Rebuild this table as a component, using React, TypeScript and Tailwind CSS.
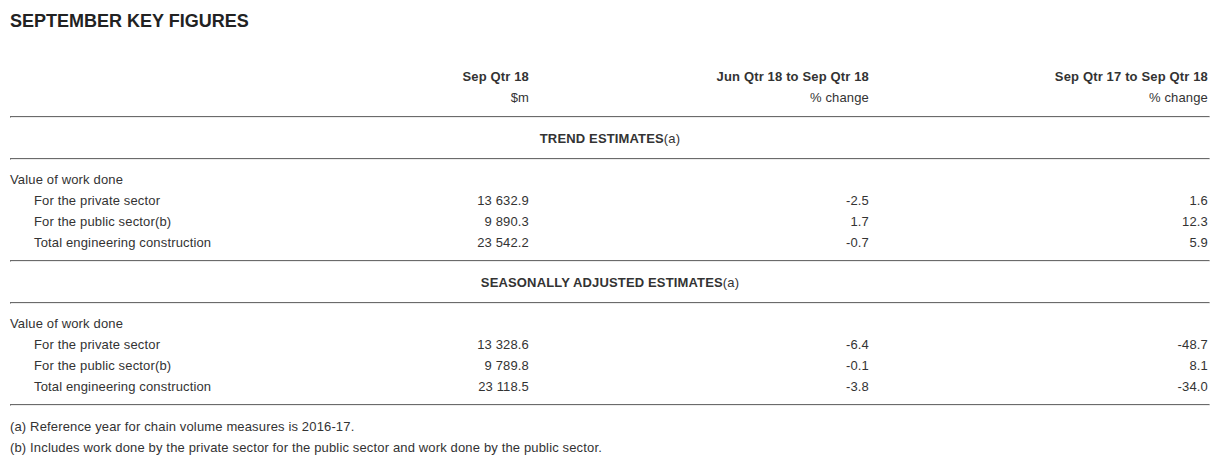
const rows = (
  vals: [string, string, string, string][]
) => vals;

const trend = rows([
  ['For the private sector', '13 632.9', '-2.5', '1.6'],
  ['For the public sector(b)', '9 890.3', '1.7', '12.3'],
  ['Total engineering construction', '23 542.2', '-0.7', '5.9'],
]);

const seasonal = rows([
  ['For the private sector', '13 328.6', '-6.4', '-48.7'],
  ['For the public sector(b)', '9 789.8', '-0.1', '8.1'],
  ['Total engineering construction', '23 118.5', '-3.8', '-34.0'],
]);

function Rule() {
  return (
    <div className="h-[2px] border border-t-[#6b6b6b] border-l-[#6b6b6b] border-b-[#ececec] border-r-[#ececec]" />
  );
}

function Row({ cells, indent }: { cells: [string, string, string, string]; indent?: boolean }) {
  return (
    <div className="grid h-[21px] grid-cols-[290px_231px_340px_339px] leading-[21px]">
      <div className={indent ? 'pl-[24px]' : ''}>{cells[0]}</div>
      <div className="pr-[2px] text-right">{cells[1]}</div>
      <div className="pr-[2px] text-right">{cells[2]}</div>
      <div className="pr-[2px] text-right">{cells[3]}</div>
    </div>
  );
}

function Section({ title, data }: { title: string; data: [string, string, string, string][] }) {
  return (
    <>
      <div className="pt-[10px] pb-[9px] text-center leading-[21px]">
        <span className="font-bold">{title}</span>(a)
      </div>
      <Rule />
      <div className="pt-[9px] pb-[7px]">
        <Row cells={['Value of work done', '', '', '']} />
        {data.map((r) => (
          <Row key={r[0]} cells={r} indent />
        ))}
      </div>
      <Rule />
    </>
  );
}

export default function App() {
  return (
    <div className="min-h-[468px] bg-white font-['Liberation_Sans',Arial,sans-serif] text-[13px] tracking-[0.15px] text-[#333]">
      <h1 className="px-[10px] pt-[10px] text-[18px] leading-[22px] font-bold tracking-normal text-[#222]">SEPTEMBER KEY FIGURES</h1>
      <div className="ml-[10px] mt-[34px] w-[1200px]">
        <div className="pb-[8px]">
          <div className="grid h-[21px] grid-cols-[290px_231px_340px_339px] leading-[21px] font-bold">
            <div />
            <div className="pr-[2px] text-right">Sep Qtr 18</div>
            <div className="pr-[2px] text-right">Jun Qtr 18 to Sep Qtr 18</div>
            <div className="pr-[2px] text-right">Sep Qtr 17 to Sep Qtr 18</div>
          </div>
          <Row cells={['', '$m', '% change', '% change']} />
        </div>
        <Rule />
        <Section title="TREND ESTIMATES" data={trend} />
        <Section title="SEASONALLY ADJUSTED ESTIMATES" data={seasonal} />
        <div className="pt-[10px] leading-[21px]">
          <p>(a) Reference year for chain volume measures is 2016-17.</p>
          <p>(b) Includes work done by the private sector for the public sector and work done by the public sector.</p>
        </div>
      </div>
    </div>
  );
}
